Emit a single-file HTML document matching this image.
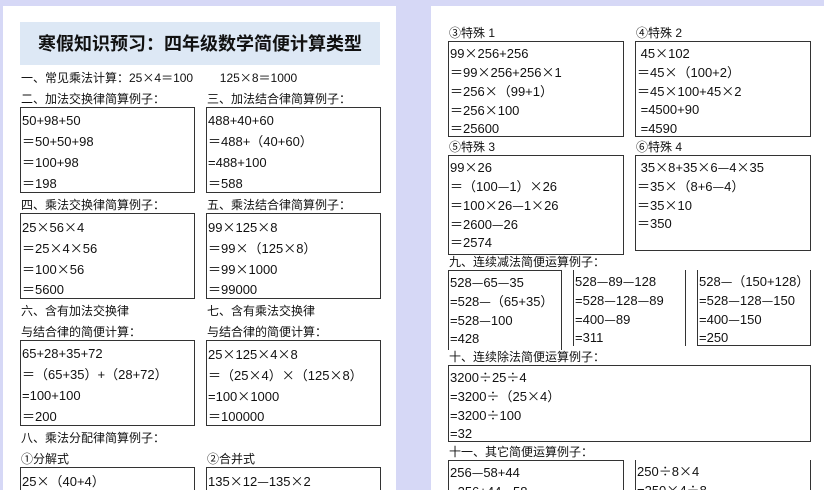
<!DOCTYPE html>
<html><head><meta charset="utf-8"><style>
html,body{margin:0;width:824px;height:490px;overflow:hidden}
body{background:#d6d8f6;position:relative;font-family:"Liberation Sans","Noto Sans CJK SC",sans-serif;color:#111}
i{font-style:normal;font-family:"Noto Sans CJK SC",sans-serif}
.pg{position:absolute;background:#fff}
.t{position:absolute;font-size:12px;white-space:nowrap;line-height:14px}
.b{position:absolute;border:1.5px solid #333;box-sizing:border-box;font-size:13px;padding-left:1px;white-space:nowrap;overflow:hidden}
.b div{height:21px;line-height:21px}
.r div{height:19px;line-height:19px}
</style></head><body>
<div class="pg" style="left:3px;top:6px;width:393px;height:484px"></div>
<div class="pg" style="left:431px;top:6px;width:393px;height:484px"></div>
<div style="position:absolute;left:20px;top:22px;width:360px;height:43px;background:#dde8f5;font-size:18px;font-weight:bold;text-align:center;line-height:44px">寒假知识预习：四年级数学简便计算类型</div>
<div class="t" style="left:21px;top:71px">一、常见乘法计算：25<i>×</i>4<i>＝</i>100&nbsp;&nbsp;&nbsp;&nbsp;&nbsp;&nbsp;&nbsp;&nbsp;125<i>×</i>8<i>＝</i>1000</div>
<div class="t" style="left:21px;top:92px">二、加法交换律简算例子：</div>
<div class="t" style="left:207px;top:92px">三、加法结合律简算例子：</div>
<div class="b" style="left:20px;top:107px;width:175px;height:86px;padding-top:2px"><div>50+98+50</div><div>＝50+50+98</div><div>＝100+98</div><div>＝198</div></div>
<div class="b" style="left:206px;top:107px;width:175px;height:86px;padding-top:2px"><div>488+40+60</div><div>＝488+（40+60）</div><div>=488+100</div><div>＝588</div></div>
<div class="t" style="left:21px;top:198px">四、乘法交换律简算例子：</div>
<div class="t" style="left:207px;top:198px">五、乘法结合律简算例子：</div>
<div class="b" style="left:20px;top:213px;width:175px;height:86px;padding-top:2px"><div>25<i>×</i>56<i>×</i>4</div><div>＝25<i>×</i>4<i>×</i>56</div><div>＝100<i>×</i>56</div><div>＝5600</div></div>
<div class="b" style="left:206px;top:213px;width:175px;height:86px;padding-top:2px"><div>99<i>×</i>125<i>×</i>8</div><div>＝99<i>×</i>（125<i>×</i>8）</div><div>＝99<i>×</i>1000</div><div>＝99000</div></div>
<div class="t" style="left:21px;top:304px">六、含有加法交换律</div>
<div class="t" style="left:207px;top:304px">七、含有乘法交换律</div>
<div class="t" style="left:21px;top:325px">与结合律的简便计算：</div>
<div class="t" style="left:207px;top:325px">与结合律的简便计算：</div>
<div class="b" style="left:20px;top:340px;width:175px;height:86px;padding-top:2px"><div>65+28+35+72</div><div>＝（65+35）+（28+72）</div><div>=100+100</div><div>＝200</div></div>
<div class="b" style="left:206px;top:340px;width:175px;height:86px;padding-top:2px"><div>25<i>×</i>125<i>×</i>4<i>×</i>8</div><div>＝（25<i>×</i>4）<i>×</i>（125<i>×</i>8）</div><div>=100<i>×</i>1000</div><div>＝100000</div></div>
<div class="t" style="left:21px;top:431px">八、乘法分配律简算例子：</div>
<div class="t" style="left:21px;top:452px">①分解式</div>
<div class="t" style="left:207px;top:452px">②合并式</div>
<div class="b" style="left:20px;top:467px;width:175px;height:40px;padding-top:2px"><div>25<i>×</i>（40+4）</div></div>
<div class="b" style="left:206px;top:467px;width:175px;height:40px;padding-top:2px"><div>135<i>×</i>12<i>—</i>135<i>×</i>2</div></div>

<div class="t" style="left:449px;top:26px">③特殊 1</div>
<div class="t" style="left:636px;top:26px">④特殊 2</div>
<div class="b r" style="left:448px;top:41px;width:176px;height:96px;padding-top:1px"><div>99<i>×</i>256+256</div><div>＝99<i>×</i>256+256<i>×</i>1</div><div>＝256<i>×</i>（99+1）</div><div>＝256<i>×</i>100</div><div>＝25600</div></div>
<div class="b r" style="left:635px;top:41px;width:176px;height:96px;padding-top:1px"><div>&nbsp;45<i>×</i>102</div><div>＝45<i>×</i>（100+2）</div><div>＝45<i>×</i>100+45<i>×</i>2</div><div>&nbsp;=4500+90</div><div>&nbsp;=4590</div></div>
<div class="t" style="left:449px;top:140px">⑤特殊 3</div>
<div class="t" style="left:636px;top:140px">⑥特殊 4</div>
<div class="b r" style="left:448px;top:155px;width:176px;height:100px;padding-top:1px"><div>99<i>×</i>26</div><div>＝（100<i>—</i>1）<i>×</i>26</div><div>＝100<i>×</i>26<i>—</i>1<i>×</i>26</div><div>＝2600<i>—</i>26</div><div>＝2574</div></div>
<div class="b r" style="left:635px;top:155px;width:176px;height:96px;padding-top:1px"><div>&nbsp;35<i>×</i>8+35<i>×</i>6<i>—</i>4<i>×</i>35</div><div>＝35<i>×</i>（8+6<i>—</i>4）</div><div>＝35<i>×</i>10</div><div>＝350</div></div>
<div class="t" style="left:449px;top:255px">九、连续减法简便运算例子：</div>
<div class="b r" style="left:448px;top:270px;width:114px;height:80px;border-bottom:none;padding-top:1px"><div>528<i>—</i>65<i>—</i>35</div><div>=528<i>—</i>（65+35）</div><div>=528<i>—</i>100</div><div>=428</div></div>
<div class="b r" style="left:573px;top:270px;width:112px;height:76px;border-top:none;border-right:none;border-bottom:none;padding-top:1px"><div>528<i>—</i>89<i>—</i>128</div><div>=528<i>—</i>128<i>—</i>89</div><div>=400<i>—</i>89</div><div>=311</div></div>
<div class="b" style="left:685px;top:270px;width:0;height:76px;border-width:0 0 0 1.5px"></div>
<div class="b r" style="left:697px;top:270px;width:114px;height:76px;border-top:none;padding-top:1px"><div>528<i>—</i>（150+128）</div><div>=528<i>—</i>128<i>—</i>150</div><div>=400<i>—</i>150</div><div>=250</div></div>
<div class="t" style="left:449px;top:350px">十、连续除法简便运算例子：</div>
<div class="b r" style="left:448px;top:365px;width:363px;height:77px;padding-top:1px"><div>3200<i>÷</i>25<i>÷</i>4</div><div>=3200<i>÷</i>（25<i>×</i>4）</div><div>=3200<i>÷</i>100</div><div>=32</div></div>
<div class="t" style="left:449px;top:445px">十一、其它简便运算例子：</div>
<div class="b r" style="left:448px;top:460px;width:176px;height:40px;padding-top:1px"><div>256<i>—</i>58+44</div><div>=256+44<i>—</i>58</div></div>
<div class="b r" style="left:635px;top:460px;width:176px;height:40px;border-top:none;padding-top:1px"><div>250<i>÷</i>8<i>×</i>4</div><div>=250<i>×</i>4<i>÷</i>8</div></div>
</body></html>
